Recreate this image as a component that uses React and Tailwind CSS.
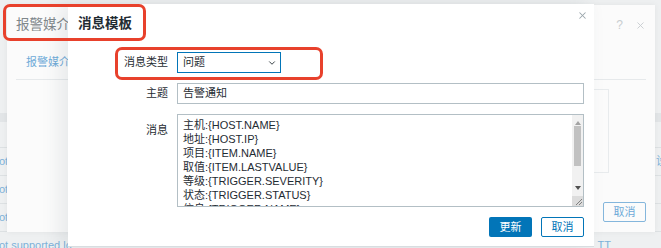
import { X, ChevronDown } from 'lucide-react';

const LINES = [
  '主机:{HOST.NAME}',
  '地址:{HOST.IP}',
  '项目:{ITEM.NAME}',
  '取值:{ITEM.LASTVALUE}',
  '等级:{TRIGGER.SEVERITY}',
  '状态:{TRIGGER.STATUS}',
  '信息:{TRIGGER.NAME}',
];

function PageRow({ left, right }) {
  return (
    <div className="flex h-[28px] items-center justify-between border-b border-[#dde1e3] text-[11px] text-[#7db2d9]">
      <span className="-ml-[1px]">{left}</span>
      <span className="w-[5px] overflow-hidden">{right}</span>
    </div>
  );
}

function BackDialog() {
  return (
    <div className="absolute left-[7px] top-[5px] flex h-[227px] w-[648px] flex-col bg-[#fbfbfb] shadow-[0_0_6px_rgba(0,0,0,0.06)]">
      <div className="flex h-[40px] items-center justify-between pl-[9px] pr-[9px]">
        <span className="text-[13.5px] text-[#7f878b]">报警媒介</span>
        <div className="flex items-center gap-[12px] text-[#c8cdd0]">
          <span className="text-[12px]">?</span>
          <X className="h-[11px] w-[11px]" strokeWidth={2} />
        </div>
      </div>
      <div className="mx-[9px] flex h-[35px] items-center border-b border-[#e6e9eb] pl-[10px] pt-[1px] text-[11px] text-[#6eaad8]">
        报警媒介
      </div>
      <div className="ml-auto mr-[46px] mt-[9px] h-[84px] w-[540px] border border-[#e8ebed]" />
      <div className="mr-[9px] mt-[29px] flex justify-end">
        <div className="flex h-[20px] w-[43px] items-center justify-center rounded-[2px] border border-[#84b6dc] text-[11px] text-[#6eaad8]">
          取消
        </div>
      </div>
    </div>
  );
}

function Scrollbar() {
  return (
    <div className="flex w-[11px] flex-col bg-[#f1f1f1]">
      <div className="flex h-[11px] items-end justify-center pb-[1px]">
        <div className="h-0 w-0 border-x-[3px] border-b-[4px] border-x-transparent border-b-[#a3a3a3]" />
      </div>
      <div className="flex-1 px-[2px]">
        <div className="h-[40px] bg-[#c1c1c1]" />
      </div>
      <div className="flex h-[11px] items-start justify-center pt-[1px]">
        <div className="h-0 w-0 border-x-[3px] border-t-[4px] border-x-transparent border-t-[#505050]" />
      </div>
      <div className="flex h-[10px] items-end justify-end bg-[#dcdcdc] p-[1px]">
        <svg width="7" height="7" viewBox="0 0 7 7">
          <path d="M1 7L7 1M4 7L7 4" stroke="#808080" strokeWidth="1" />
        </svg>
      </div>
    </div>
  );
}

function FrontDialog() {
  return (
    <div className="absolute left-[68px] top-[4px] flex h-[243px] w-[526px] flex-col border-b border-[#d8dde0] bg-white shadow-[-8px_0_18px_rgba(60,80,90,0.10)]">
      <div className="relative flex h-[40px] items-center pl-[10px]">
        <span className="text-[13.5px] font-bold text-[#1f2c33]">消息模板</span>
        <X className="absolute right-[6px] top-[6px] h-[11px] w-[11px] text-[#9aa5ab]" strokeWidth={2.2} />
      </div>
      <div className="grid grid-cols-[90px_1fr] gap-x-[9px] gap-y-[10px] pl-[10px] pr-[10px] pt-[8px] text-[11px] text-[#1f2c33]">
        <div className="flex h-[21px] items-center justify-end">消息类型</div>
        <div className="flex h-[21px] w-[104px] items-center justify-between border border-[#0275b8] pl-[5px] pr-[3px]">
          <span>问题</span>
          <ChevronDown className="h-[10px] w-[10px] text-[#3b4448]" strokeWidth={2.4} />
        </div>
        <div className="flex h-[21px] items-center justify-end">主题</div>
        <div className="flex h-[21px] items-center border border-[#b3bfc5] pl-[5px]">告警通知</div>
        <div className="flex justify-end pt-[9px] leading-[14px]">消息</div>
        <div className="flex h-[93px] border border-[#b3bfc5]">
          <div className="flex-1 overflow-hidden pl-[5px] pt-[3px] leading-[14px]">
            {LINES.map((l) => (
              <div key={l} className="whitespace-nowrap">{l}</div>
            ))}
          </div>
          <Scrollbar />
        </div>
      </div>
      <div className="mt-[10px] flex justify-end gap-[9px] pr-[10px] text-[11px]">
        <div className="flex h-[20px] w-[43px] items-center justify-center rounded-[2px] bg-[#0275b8] text-white">
          更新
        </div>
        <div className="flex h-[20px] w-[43px] items-center justify-center rounded-[2px] border border-[#0275b8] text-[#0275b8]">
          取消
        </div>
      </div>
    </div>
  );
}

export default function App() {
  return (
    <div className="relative h-[248px] w-[661px] overflow-hidden bg-[#eef0f1] font-['Liberation_Sans','Noto_Sans_CJK_SC',sans-serif]">
      <div className="pt-[113px]">
        <div className="h-[9px] bg-[#e2e5e7]" />
        <div className="h-[26px] border-b border-[#dde1e3]" />
        <PageRow left="ot" right="设" />
        <PageRow left="ot" right="" />
        <PageRow left="ot" right="" />
        <div className="flex justify-between pt-[5px] text-[11px] text-[#7db2d9]">
          <span className="-ml-[1px]">ot supported lo</span>
          <span className="mr-[50px]">TT</span>
        </div>
      </div>

      <BackDialog />
      <FrontDialog />

      <div className="absolute left-[3px] top-[4px] h-[37px] w-[143px] rounded-[7px] border-[3px] border-[#e8412c]" />
      <div className="absolute left-[115px] top-[47px] h-[33px] w-[208px] rounded-[7px] border-[3px] border-[#e8412c]" />
    </div>
  );
}
